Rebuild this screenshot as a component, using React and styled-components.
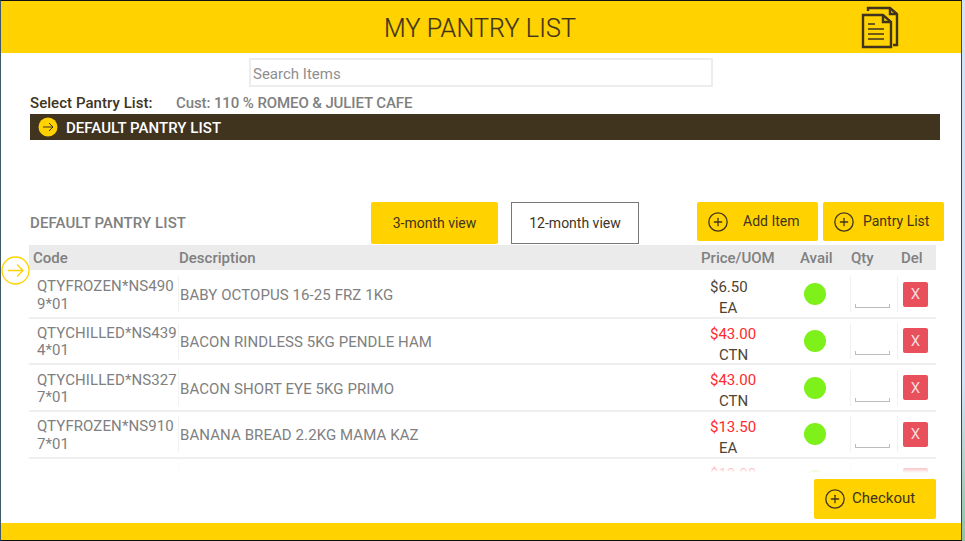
import React from "react";
import styled, { createGlobalStyle } from "styled-components";
import { CirclePlus } from "lucide-react";

const YELLOW = "#ffd200";
const DARK = "#40341f";
const GREY = "#808080";

const GlobalStyle = createGlobalStyle`
  html, body {
    margin: 0;
    padding: 0;
    height: 541px;
    overflow: hidden;
    font-family: Roboto, "Liberation Sans", sans-serif;
  }
  * { box-sizing: border-box; }
`;

const Desktop = styled.div`
  width: 965px;
  height: 541px;
  background: linear-gradient(#cfe4fb 0%, #cfe4fb 70%, #8fc3a0 100%);
`;

const Frame = styled.div`
  width: 962px;
  height: 541px;
  display: flex;
  flex-direction: column;
  background: #fff;
  border-top: 1px solid #111;
  border-bottom: 1px solid #111;
  border-left: 1px solid #3f5a66;
  border-right: 1px solid #444;
  position: relative;
`;

const Header = styled.header`
  height: 52px;
  flex: none;
  background: ${YELLOW};
  display: flex;
  align-items: center;
  justify-content: center;
  position: relative;
`;

const Title = styled.h1`
  margin: 2px 2px 0 0;
  font-size: 25px;
  font-weight: 300;
  letter-spacing: 0.15px;
  -webkit-text-stroke: 0.2px ${DARK};
  color: ${DARK};
`;

const DocsIcon = styled.svg`
  position: absolute;
  left: 860px;
  top: 4px;
`;

const SearchRow = styled.div`
  display: flex;
  padding: 5px 0 0 248px;
`;

const SearchInput = styled.input`
  width: 464px;
  height: 29px;
  border: 2px solid #ededed;
  padding: 2px 2px 0;
  font-family: inherit;
  font-size: 15px;
  color: ${GREY};
  outline: none;
  &::placeholder { color: #8e8e8e; opacity: 1; }
`;

const Content = styled.div`
  padding-left: 28px;
  display: flex;
  flex-direction: column;
`;

const SelectRow = styled.div`
  height: 27px;
  padding: 7px 0 0 1px;
  display: flex;
  font-size: 15px;
  line-height: 18px;
  font-weight: 500;
`;

const SelectLabel = styled.span`
  width: 146px;
  letter-spacing: 0.05px;
  color: ${DARK};
`;

const CustName = styled.span`
  letter-spacing: -0.1px;
  color: ${GREY};
`;

const ListBar = styled.div`
  margin-left: 1px;
  width: 910px;
  height: 26px;
  background: ${DARK};
  display: flex;
  align-items: center;
  gap: 8px;
  padding-left: 8px;
  color: #fff;
  font-size: 15px;
  font-weight: 500;
`;

const BarLabel = styled.span`
  padding-top: 2px;
  letter-spacing: 0.05px;
`;

const Toolbar = styled.div`
  margin-top: 62px;
  height: 43px;
  display: flex;
  align-items: flex-start;
`;

const SectionTitle = styled.div`
  width: 342px;
  padding-left: 1px;
  line-height: 42px;
  font-size: 15px;
  letter-spacing: 0.1px;
  font-weight: 500;
  color: ${GREY};
`;

const ViewButton = styled.button`
  width: ${(p) => (p.$active ? 127 : 128)}px;
  height: 42px;
  margin-right: 13px;
  padding: 0;
  border-radius: ${(p) => (p.$active ? "2px" : "0")};
  border: ${(p) => (p.$active ? "none" : "1px solid #777")};
  background: ${(p) => (p.$active ? YELLOW : "#fff")};
  color: ${DARK};
  font-family: inherit;
  font-size: 14px;
`;

const ActionButton = styled.button`
  width: ${(p) => p.$width || 121}px;
  height: ${(p) => p.$height || 39}px;
  margin-left: ${(p) => p.$left || 0}px;
  padding: 0 0 0 ${(p) => p.$pad || 10}px;
  display: flex;
  align-items: center;
  gap: ${(p) => p.$gap}px;
  border: none;
  border-radius: 2px;
  background: ${YELLOW};
  color: ${DARK};
  font-family: inherit;
  font-size: ${(p) => p.$size || 14}px;
`;

const ButtonLabel = styled.span`
  padding-bottom: 2px;
`;

const cols = "150px 512px 76px 84px 47px 38px";

const TableHead = styled.div`
  width: 907px;
  height: 25px;
  display: grid;
  grid-template-columns: ${cols};
  align-items: center;
  background: #ebebeb;
  color: ${GREY};
  font-size: 15px;
  font-weight: 500;
  position: relative;
`;

const HeadCell = styled.div`
  padding-left: ${(p) => p.$pad || 0}px;
`;

const RowMarker = styled.svg`
  position: absolute;
  left: -28px;
  top: 11px;
`;

const TableBody = styled.div`
  width: 907px;
  height: 203px;
  padding-top: 2px;
  overflow: hidden;
  position: relative;
  &::after {
    content: "";
    position: absolute;
    left: 0;
    right: 0;
    bottom: 0;
    height: 12px;
    background: linear-gradient(rgba(255, 255, 255, 0.2), #fff);
  }
`;

const Row = styled.div`
  height: 46.67px;
  display: grid;
  grid-template-columns: ${cols};
  grid-template-rows: 44.67px;
  align-items: center;
  border-bottom: 2px solid #efefef;
`;

const Cell = styled.div`
  height: 36px;
  display: flex;
  align-items: center;
  justify-content: ${(p) => (p.$center ? "center" : "flex-start")};
  border-right: ${(p) => (p.$line ? "1px solid #f1f1f1" : "none")};
`;

const CodeCell = styled.div`
  height: 36px;
  padding-left: 8px;
  padding-top: 2px;
  font-size: 15px;
  letter-spacing: 0.1px;
  line-height: 17.5px;
  color: ${GREY};
  word-break: break-all;
  border-right: 1px solid #f1f1f1;
`;

const Description = styled.span`
  padding: 2px 0 0 1px;
  font-size: 15px;
  letter-spacing: 0.08px;
  color: ${GREY};
  white-space: nowrap;
`;

const PriceBlock = styled.div`
  align-self: start;
  height: 44px;
  padding-top: 5px;
  font-size: 15px;
  line-height: 21px;
  color: #4f4433;
`;

const Price = styled.div`
  padding-left: 19px;
  color: ${(p) => (p.$special ? "#ff2a2a" : "#4f4433")};
`;

const Uom = styled.div`
  padding-left: 28px;
`;

const AvailDot = styled.span`
  width: 22px;
  height: 22px;
  margin-left: 12px;
  border-radius: 50%;
  background: #7ef01a;
`;

const QtyField = styled.span`
  width: 35px;
  height: 4px;
  margin: 24px 3px 0 0;
  border: 1px solid #bcbcbc;
  border-top: none;
`;

const DelButton = styled.button`
  width: 25px;
  height: 25px;
  padding: 0;
  margin-left: 5px;
  border: none;
  border-radius: 2px;
  background: #e8505b;
  color: #f6d9dc;
  font-family: inherit;
  font-size: 15px;
`;

const CheckoutRow = styled.div`
  width: 907px;
  height: 44px;
  margin-top: 6px;
  display: flex;
  justify-content: flex-end;
  align-items: flex-start;
`;

const Footer = styled.footer`
  margin-top: auto;
  height: 17px;
  flex: none;
  background: ${YELLOW};
`;

const items = [
  { code: "QTYFROZEN*NS4909*01", name: "BABY OCTOPUS 16-25 FRZ 1KG", price: "$6.50", uom: "EA" },
  { code: "QTYCHILLED*NS4394*01", name: "BACON RINDLESS 5KG PENDLE HAM", price: "$43.00", uom: "CTN", special: true },
  { code: "QTYCHILLED*NS3277*01", name: "BACON SHORT EYE 5KG PRIMO", price: "$43.00", uom: "CTN", special: true },
  { code: "QTYFROZEN*NS9107*01", name: "BANANA BREAD 2.2KG MAMA KAZ", price: "$13.50", uom: "EA", special: true },
  { code: "", name: "", price: "$13.00", uom: "EA", special: true },
];

function DocsGlyph() {
  return (
    <DocsIcon width="38" height="44" viewBox="0 0 38 44" fill="none" stroke={DARK} strokeWidth="2.4">
      <path d="M7 6V3H29L36 9V40H32" />
      <path d="M29 3V9H36" />
      <path d="M2 10H22L30 17V42H2Z" />
      <path d="M22 10V17H30" />
      <path d="M7 19H14M7 24H23M7 29H23M7 34H23" strokeWidth="1.4" />
    </DocsIcon>
  );
}

export default function App() {
  return (
    <Desktop>
      <GlobalStyle />
      <Frame>
        <Header>
          <Title>MY PANTRY LIST</Title>
          <DocsGlyph />
        </Header>
        <SearchRow>
          <SearchInput placeholder="Search Items" />
        </SearchRow>
        <Content>
          <SelectRow>
            <SelectLabel>Select Pantry List:</SelectLabel>
            <CustName>Cust: 110 % ROMEO &amp; JULIET CAFE</CustName>
          </SelectRow>
          <ListBar>
            <svg width="20" height="20" viewBox="0 0 20 20" fill="none">
              <circle cx="10" cy="10" r="9.5" fill={YELLOW} />
              <path d="M5 10H15M11 6L15 10L11 14" stroke={DARK} strokeWidth="1" />
            </svg>
            <BarLabel>DEFAULT PANTRY LIST</BarLabel>
          </ListBar>
          <Toolbar>
            <SectionTitle>DEFAULT PANTRY LIST</SectionTitle>
            <ViewButton $active>3-month view</ViewButton>
            <ViewButton>12-month view</ViewButton>
            <ActionButton $left={45} $gap={14}>
              <CirclePlus size={22} strokeWidth={1.4} />
              <ButtonLabel>Add Item</ButtonLabel>
            </ActionButton>
            <ActionButton $left={5} $gap={8}>
              <CirclePlus size={22} strokeWidth={1.4} />
              <ButtonLabel>Pantry List</ButtonLabel>
            </ActionButton>
          </Toolbar>
          <TableHead>
            <RowMarker width="29" height="29" viewBox="0 0 29 29" fill="none" stroke={YELLOW} strokeWidth="1.3">
              <circle cx="14.5" cy="14.5" r="13.5" fill="#fff" />
              <path d="M7 14.5H22M16 8.5L22 14.5L16 20.5" />
            </RowMarker>
            <HeadCell $pad={4}>Code</HeadCell>
            <HeadCell>Description</HeadCell>
            <HeadCell $pad={10}>Price/UOM</HeadCell>
            <HeadCell $pad={33}>Avail</HeadCell>
            <HeadCell>Qty</HeadCell>
            <HeadCell $pad={3}>Del</HeadCell>
          </TableHead>
          <TableBody>
            {items.map((item) => (
              <Row key={item.code + item.price}>
                <CodeCell>{item.code}</CodeCell>
                <Cell>
                  <Description>{item.name}</Description>
                </Cell>
                <PriceBlock>
                  <Price $special={item.special}>{item.price}</Price>
                  <Uom>{item.uom}</Uom>
                </PriceBlock>
                <Cell $center $line>
                  <AvailDot />
                </Cell>
                <Cell $center $line>
                  <QtyField />
                </Cell>
                <Cell>
                  <DelButton>X</DelButton>
                </Cell>
              </Row>
            ))}
          </TableBody>
          <CheckoutRow>
            <ActionButton $width={122} $height={40} $gap={6} $pad={10} $size={15}>
              <CirclePlus size={22} strokeWidth={1.4} />
              <ButtonLabel>Checkout</ButtonLabel>
            </ActionButton>
          </CheckoutRow>
        </Content>
        <Footer />
      </Frame>
    </Desktop>
  );
}
